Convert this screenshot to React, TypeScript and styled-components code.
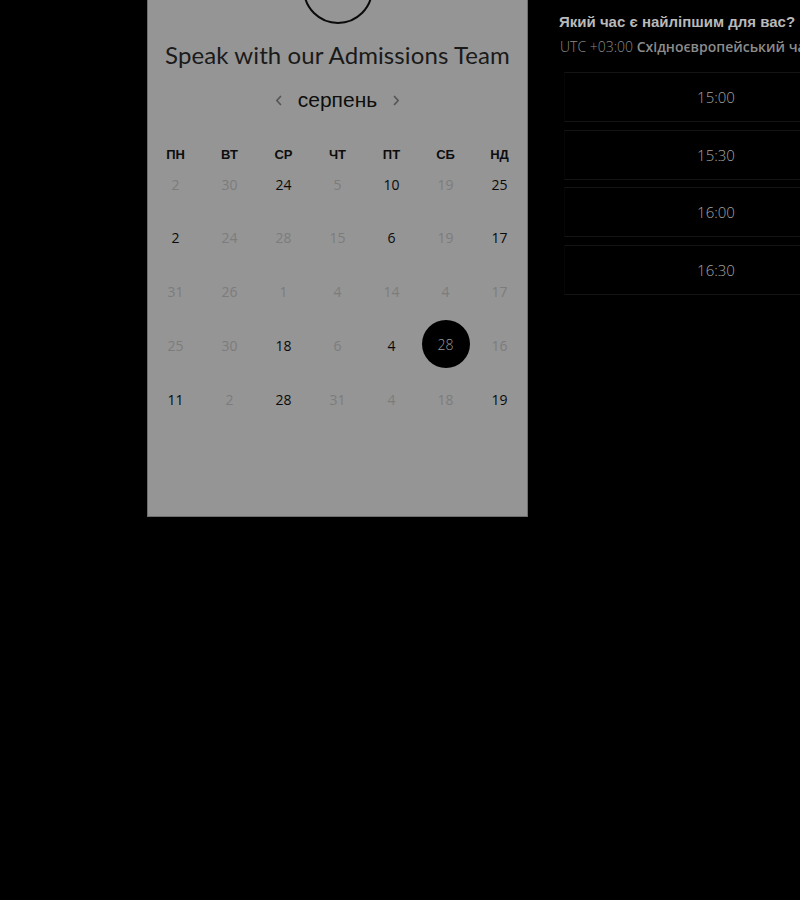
import React from "react";
import styled, { createGlobalStyle } from "styled-components";

const Global = createGlobalStyle`
  html, body { margin: 0; padding: 0; background: #000; overflow: hidden; }
  body { font-family: "Liberation Sans", Arial, sans-serif; }
`;

const Page = styled.div`
  display: flex;
  align-items: flex-start;
  width: 800px;
  height: 900px;
  padding-left: 147px;
  box-sizing: border-box;
  background: #000;
  overflow: hidden;
`;

const Panel = styled.section`
  flex: 0 0 381px;
  height: 517px;
  box-sizing: border-box;
  background: #959595;
  border: 1px solid #6e6e6e;
  border-top: none;
  display: flex;
  flex-direction: column;
  align-items: center;
  overflow: hidden;
`;

const Avatar = styled.div`
  width: 70px;
  height: 70px;
  margin-top: -46px;
  border-radius: 50%;
  border: 2.5px solid #0a0a0a;
  box-sizing: border-box;
  flex: 0 0 auto;
`;

const Title = styled.h1`
  margin: 16px 0 0;
  font-family: Lato, "Open Sans", sans-serif;
  font-weight: 400;
  font-size: 24px;
  line-height: 30px;
  color: #1a1a1a;
  letter-spacing: 0.1px;
  white-space: nowrap;
`;

const MonthNav = styled.div`
  margin-top: 15px;
  height: 30px;
  display: flex;
  align-items: center;
  gap: 15px;
`;

const NavButton = styled.button`
  border: none;
  background: none;
  padding: 0;
  width: 8px;
  height: 12px;
  display: flex;
  align-items: center;
  justify-content: center;
  cursor: pointer;
`;

const Month = styled.span`
  font-family: "Liberation Sans", Arial, sans-serif;
  font-size: 21px;
  line-height: 30px;
  color: #0d0d0d;
`;

const WeekHeader = styled.div`
  margin-top: 33px;
  width: 378px;
  display: grid;
  grid-template-columns: repeat(7, 54px);
`;

const WeekDay = styled.span`
  text-align: center;
  font-family: "Liberation Sans", Arial, sans-serif;
  font-weight: 700;
  font-size: 13px;
  line-height: 14px;
  color: #0d0d0d;
`;

const DaysGrid = styled.div`
  margin-top: -2px;
  width: 378px;
  display: grid;
  grid-template-columns: repeat(7, 54px);
  grid-auto-rows: 48px;
  row-gap: 5.8px;
`;

const DayCell = styled.div`
  display: flex;
  align-items: center;
  justify-content: center;
`;

const Day = styled.span<{ $tone: "dark" | "faded" | "selected" }>`
  width: 48px;
  height: 48px;
  border-radius: 50%;
  display: flex;
  align-items: center;
  justify-content: center;
  font-family: "Open Sans", sans-serif;
  font-size: 14px;
  font-weight: ${(p) => (p.$tone === "selected" ? 300 : 400)};
  color: ${(p) =>
    p.$tone === "dark" ? "#0a0a0a" : p.$tone === "selected" ? "#9a9a9a" : "#7c7c7c"};
  background: ${(p) => (p.$tone === "selected" ? "#000" : "transparent")};
  margin-top: ${(p) => (p.$tone === "selected" ? "-2px" : "0")};
`;

const Side = styled.aside`
  margin-left: 31px;
  flex: 0 0 330px;
  padding-top: 12px;
`;

const SideTitle = styled.h2`
  margin: 0;
  font-family: "Liberation Sans", Arial, sans-serif;
  font-weight: 700;
  font-size: 15px;
  line-height: 20px;
  color: #b9b9b9;
  white-space: nowrap;
`;

const TimeZone = styled.div`
  margin-top: 5px;
  padding-left: 1px;
  font-family: "Open Sans", sans-serif;
  font-size: 14px;
  line-height: 19px;
  color: #8a8a8a;
  font-weight: 300;
  white-space: nowrap;
`;

const ZoneName = styled.span`
  font-weight: 600;
  color: #8c8c8c;
`;

const Slots = styled.div`
  margin-top: 16px;
  margin-left: 5px;
  width: 302px;
  display: flex;
  flex-direction: column;
  gap: 7.5px;
`;

const Slot = styled.button`
  height: 50px;
  width: 100%;
  background: #000;
  border: 1px solid #141414;
  border-left-color: #060606;
  border-right-color: #060606;
  display: flex;
  align-items: center;
  justify-content: center;
  font-family: "Open Sans", sans-serif;
  font-weight: 300;
  font-size: 15px;
  color: #a3a3a3;
  cursor: pointer;
  padding: 0 0 0 2px;
`;

const Chevron = ({ dir }: { dir: "left" | "right" }) => (
  <svg width="7" height="11" viewBox="0 0 7 11">
    <path
      d={dir === "left" ? "M5.5 1.5 L1.8 5.5 L5.5 9.5" : "M1.5 1.5 L5.2 5.5 L1.5 9.5"}
      fill="none"
      stroke="#555"
      strokeWidth="1.7"
      strokeLinecap="round"
      strokeLinejoin="round"
    />
  </svg>
);

type Tone = "dark" | "faded" | "selected";
const d = (n: number): [number, Tone] => [n, "dark"];
const f = (n: number): [number, Tone] => [n, "faded"];

const rows: [number, Tone][][] = [
  [f(2), f(30), d(24), f(5), d(10), f(19), d(25)],
  [d(2), f(24), f(28), f(15), d(6), f(19), d(17)],
  [f(31), f(26), f(1), f(4), f(14), f(4), f(17)],
  [f(25), f(30), d(18), f(6), d(4), [28, "selected"], f(16)],
  [d(11), f(2), d(28), f(31), f(4), f(18), d(19)],
];

const weekDays = ["ПН", "ВТ", "СР", "ЧТ", "ПТ", "СБ", "НД"];
const times = ["15:00", "15:30", "16:00", "16:30"];

export default function App() {
  return (
    <>
      <Global />
      <Page>
        <Panel>
          <Avatar />
          <Title>Speak with our Admissions Team</Title>
          <MonthNav>
            <NavButton aria-label="prev">
              <Chevron dir="left" />
            </NavButton>
            <Month>серпень</Month>
            <NavButton aria-label="next">
              <Chevron dir="right" />
            </NavButton>
          </MonthNav>
          <WeekHeader>
            {weekDays.map((w) => (
              <WeekDay key={w}>{w}</WeekDay>
            ))}
          </WeekHeader>
          <DaysGrid>
            {rows.flat().map(([n, tone], i) => (
              <DayCell key={i}>
                <Day $tone={tone}>{n}</Day>
              </DayCell>
            ))}
          </DaysGrid>
        </Panel>
        <Side>
          <SideTitle>Який час є найліпшим для вас?</SideTitle>
          <TimeZone>
            UTC +03:00 <ZoneName>Східноєвропейський час</ZoneName>
          </TimeZone>
          <Slots>
            {times.map((t) => (
              <Slot key={t}>{t}</Slot>
            ))}
          </Slots>
        </Side>
      </Page>
    </>
  );
}
